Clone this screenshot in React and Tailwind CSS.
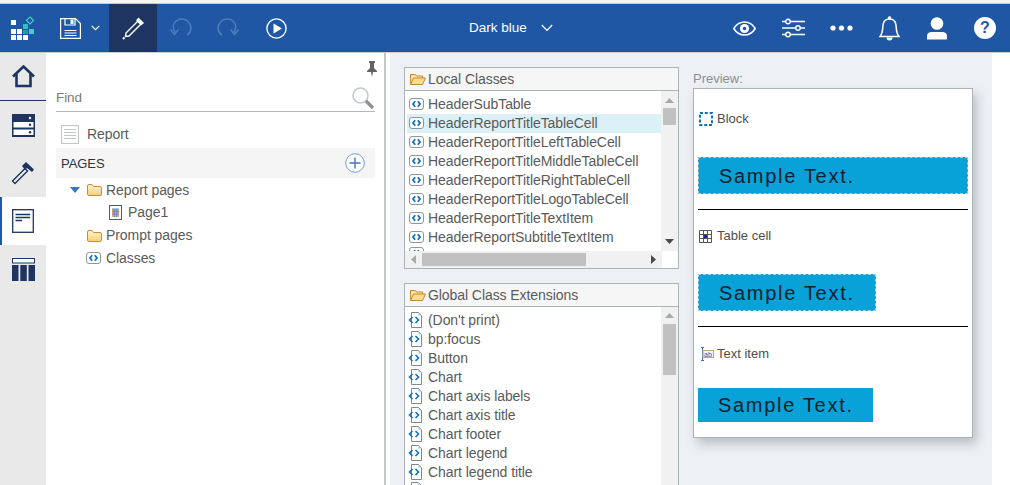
import React from "react";

const Font = "font-['Liberation_Sans',Arial,sans-serif]";

function ClassIcon() {
  return (
    <svg width="15" height="13" viewBox="0 0 15 13" className="shrink-0">
      <rect x="0.5" y="0.5" width="14" height="11" rx="2.5" fill="#fff" stroke="#8f959b" />
      <path d="M6.2 3.2 L4 6 L6.2 8.8 M8.8 3.2 L11 6 L8.8 8.8" fill="none" stroke="#1470b8" strokeWidth="1.8" />
    </svg>
  );
}

function FileClassIcon() {
  return (
    <svg width="15" height="17" viewBox="0 0 15 17" className="shrink-0">
      <path d="M3.5 .5 H10.5 L13.5 3.5 V15.5 H3.5 Z" fill="#fff" stroke="#7d8b96" />
      <path d="M10.5 .5 V3.5 H13.5 Z" fill="#a9c4d8" />
      <path d="M4.5 5 L1.5 8 L4.5 11 M7.5 5 L10.5 8 L7.5 11" fill="none" stroke="#1470b8" strokeWidth="1.6" />
    </svg>
  );
}

function Folder({ open }) {
  return open ? (
    <svg width="16" height="12" viewBox="0 0 16 12" className="shrink-0">
      <path d="M.5 11.5 V1.5 H5.5 L6.5 3 H12.5 V5" fill="#fbe3a8" stroke="#c58b32" />
      <path d="M.5 11.5 L3.5 5 H15.5 L12.5 11.5 Z" fill="#fcdc94" stroke="#c58b32" />
    </svg>
  ) : (
    <svg width="15" height="12" viewBox="0 0 15 12" className="shrink-0">
      <defs>
        <linearGradient id="fg" x1="0" y1="0" x2="0" y2="1">
          <stop offset="0" stopColor="#fff3cf" />
          <stop offset="1" stopColor="#f9cf79" />
        </linearGradient>
      </defs>
      <path d="M.5 2 Q.5 .5 2 .5 H5 L6.5 2.5 H13 Q14.5 2.5 14.5 4 V10 Q14.5 11.5 13 11.5 H2 Q.5 11.5 .5 10 Z" fill="url(#fg)" stroke="#c98d35" />
    </svg>
  );
}

function Arrow({ d }) {
  const p = { up: "M0 5 L4.5 0 L9 5 Z", down: "M0 0 L9 0 L4.5 5 Z", left: "M5 0 V9 L0 4.5 Z", right: "M0 0 V9 L5 4.5 Z" }[d];
  const w = d === "left" || d === "right" ? 5 : 9;
  const h = d === "left" || d === "right" ? 9 : 5;
  const color = d === "up" || d === "left" ? "#a9a9a9" : "#4a4a4a";
  return (
    <svg width={w} height={h} viewBox={`0 0 ${w} ${h}`}>
      <path d={p} fill={color} />
    </svg>
  );
}

function Header() {
  return (
    <header className="flex h-[48px] shrink-0 items-center bg-[#1f57a4] text-white">
      <div className="flex w-[46px] justify-center">
        <svg width="24" height="24" viewBox="0 0 24 24">
          <rect x="0" y="4" width="5" height="5" fill="#fff" />
          <rect x="0" y="13" width="5" height="5" fill="#fff" />
          <rect x="6" y="13" width="5" height="5" fill="#fff" />
          <rect x="0" y="19" width="5" height="5" fill="#fff" />
          <rect x="6" y="19" width="5" height="5" fill="#fff" />
          <rect x="12" y="19" width="5" height="5" fill="#fff" />
          <rect x="12" y="8" width="5" height="5" fill="#2cc2b5" />
          <rect x="18" y="13" width="5" height="5" fill="#3fd0c0" />
          <rect x="12" y="14" width="5" height="4" fill="#1f9fa8" />
          <path d="M19 1 L22.5 4.5 L19 8 L15.5 4.5 Z" fill="none" stroke="#3fd0c0" strokeWidth="1.2" />
        </svg>
      </div>
      <div className="ml-[14px] flex w-[49px] items-center">
        <svg width="21" height="21" viewBox="0 0 21 21" fill="none" stroke="#fff" strokeWidth="1.2">
          <path d="M.6 .6 H15.5 L20.4 5.5 V20.4 H.6 Z" />
          <path d="M5 .6 V7 H15 V.6" />
          <rect x="10.5" y="1.5" width="3" height="4.5" fill="#fff" stroke="none" />
          <path d="M4.5 12.5 H16.5 M4.5 15 H16.5 M4.5 17.5 H16.5" />
        </svg>
        <svg width="9" height="6" viewBox="0 0 9 6" className="ml-[10px]">
          <path d="M.7 .8 L4.5 4.6 L8.3 .8" fill="none" stroke="#fff" strokeWidth="1.2" />
        </svg>
      </div>
      <div className="flex h-full w-[48px] items-center justify-center bg-[#1d3560]">
        <svg width="24" height="24" viewBox="0 0 24 24" fill="none" stroke="#fff" strokeWidth="1.4">
          <path d="M5 17 L17 5 L20 8 L8 20 L4.5 20.5 Z" />
          <path d="M17.5 2.5 L22 7 L20 8.5 L16 4.5 Z" fill="#fff" />
          <path d="M2 23 L3.5 21.5" strokeWidth="2" />
        </svg>
      </div>
      <div className="ml-[12px] flex w-[24px] justify-center">
        <svg width="24" height="20" viewBox="0 0 24 20" fill="none" stroke="#4d7cba" strokeWidth="1.6">
          <path d="M6.5 15 C-.5 5 11 -3 18.5 3 C24 8 22 15 18 17" />
          <path d="M1.5 11.5 L5.5 16.5 L9.5 11.5" />
        </svg>
      </div>
      <div className="ml-[23px] flex w-[24px] justify-center">
        <svg width="24" height="20" viewBox="0 0 24 20" fill="none" stroke="#4d7cba" strokeWidth="1.6">
          <path d="M17.5 15 C24.5 5 13 -3 5.5 3 C0 8 2 15 6 17" />
          <path d="M22.5 11.5 L18.5 16.5 L14.5 11.5" />
        </svg>
      </div>
      <div className="ml-[25px] flex w-[22px] justify-center">
        <svg width="21" height="21" viewBox="0 0 21 21">
          <circle cx="10.5" cy="10.5" r="9.6" fill="none" stroke="#fff" strokeWidth="1.4" />
          <path d="M7.5 5.5 L16 10.5 L7.5 15.5 Z" fill="#fff" />
        </svg>
      </div>
      <div className="ml-[182px] flex w-[83px] items-center gap-[14px]">
        <span className="text-[13.5px] whitespace-nowrap">Dark blue</span>
        <svg width="12" height="8" viewBox="0 0 12 8" className="shrink-0">
          <path d="M.8 1 L6 6.4 L11.2 1" fill="none" stroke="#fff" strokeWidth="1.3" />
        </svg>
      </div>
      <div className="ml-[181px] flex items-center">
        <svg width="23" height="15" viewBox="0 0 23 15">
          <path d="M.8 7.5 C6 -1.2 17 -1.2 22.2 7.5 C17 16.2 6 16.2 .8 7.5 Z" fill="none" stroke="#fff" strokeWidth="1.5" />
          <circle cx="11.5" cy="7.5" r="4.6" fill="#fff" />
          <circle cx="11.5" cy="7.5" r="1.7" fill="#1f57a4" />
        </svg>
        <svg width="23" height="20" viewBox="0 0 23 20" className="ml-[26px]" stroke="#fff" strokeWidth="1.4" fill="#1f57a4">
          <path d="M0 3.5 H23 M0 10 H23 M0 16.5 H23" />
          <circle cx="6" cy="3.5" r="2.2" />
          <circle cx="16" cy="10" r="2.2" />
          <circle cx="6" cy="16.5" r="2.2" />
        </svg>
        <svg width="23" height="6" viewBox="0 0 23 6" className="ml-[25px]" fill="#fff">
          <circle cx="3" cy="3" r="2.6" />
          <circle cx="11.5" cy="3" r="2.6" />
          <circle cx="20" cy="3" r="2.6" />
        </svg>
        <svg width="21" height="25" viewBox="0 0 21 25" className="ml-[26px]">
          <path d="M1 20.5 C4 17 3.5 13 4 9 C4.5 5 7 3 10.5 3 C14 3 16.5 5 17 9 C17.5 13 17 17 20 20.5 Z" fill="none" stroke="#fff" strokeWidth="1.5" />
          <circle cx="10.5" cy="2" r="1.8" fill="#fff" />
          <path d="M7.5 21.5 H13.5 A3 3 0 0 1 7.5 21.5 Z" fill="#fff" />
        </svg>
        <svg width="20" height="23" viewBox="0 0 20 23" className="ml-[27px]" fill="#fff">
          <circle cx="10" cy="6.5" r="6.3" />
          <path d="M0 22.5 V19 Q0 15.5 4 15 H16 Q20 15.5 20 19 V22.5 Z" />
        </svg>
        <div className="ml-[27px] flex h-[22px] w-[22px] items-center justify-center rounded-full bg-white text-[16px] font-bold text-[#1f57a4]">?</div>
      </div>
    </header>
  );
}

function RailItem({ children, active, line }) {
  return (
    <div className={`flex h-[48px] items-center justify-center ${active ? "border-l-2 border-[#1f57a4] bg-white pr-[2px]" : ""} ${line ? "border-b border-[#1d3560]" : ""}`}>
      {children}
    </div>
  );
}

function Rail() {
  return (
    <nav className="w-[46px] shrink-0 bg-[#e9e9e9]">
      <RailItem line>
        <svg width="23" height="23" viewBox="0 0 23 23" fill="none" stroke="#1d3560" strokeWidth="2.6">
          <path d="M1 11.5 L11.5 1.5 L22 11.5" />
          <path d="M4.5 9 V21 H18.5 V9" />
        </svg>
      </RailItem>
      <RailItem>
        <svg width="23" height="23" viewBox="0 0 23 23">
          <rect width="23" height="23" fill="#1d3560" />
          <rect x="1.5" y="8" width="20" height="5.5" fill="#fff" />
          <rect x="1.5" y="15.5" width="20" height="5.5" fill="#fff" />
          <circle cx="18" cy="4" r="1.2" fill="#fff" />
          <circle cx="18" cy="10.7" r="1.2" fill="#1d3560" />
          <circle cx="18" cy="18.2" r="1.2" fill="#1d3560" />
        </svg>
      </RailItem>
      <RailItem>
        <svg width="24" height="24" viewBox="0 0 24 24">
          <path d="M1.5 20 L14 7.5 L16.5 10 L4 22.5 Z" fill="none" stroke="#1d3560" strokeWidth="1.4" />
          <path d="M11 5 L15 1 L23 8.5 L21 11 L16 7 L14 9 Z" fill="#1d3560" />
        </svg>
      </RailItem>
      <RailItem active>
        <svg width="22" height="24" viewBox="0 0 22 24">
          <rect x=".7" y=".7" width="20.6" height="22.6" fill="#fff" stroke="#1d3560" strokeWidth="1.3" />
          <path d="M3.5 5.5 H18 M3.5 8.5 H18 M3.5 11.5 H10" stroke="#1d3560" strokeWidth="1.4" />
        </svg>
      </RailItem>
      <RailItem>
        <svg width="23" height="23" viewBox="0 0 23 23">
          <rect x=".5" y=".5" width="22" height="4.5" fill="#fff" stroke="#1d3560" />
          <rect x="0" y="7" width="6.5" height="16" fill="#1d3560" />
          <rect x="8.3" y="7" width="6.5" height="16" fill="#1d3560" />
          <rect x="16.5" y="7" width="6.5" height="16" fill="#1d3560" />
        </svg>
      </RailItem>
    </nav>
  );
}

function Tree() {
  return (
    <aside className="w-[340px] shrink-0 border-r-2 border-[#c4c6c8] bg-white pl-[10px] pr-[9px] text-[14px] tracking-[-0.07px] text-[#5a5a5a]">
      <div className="flex h-[24px] items-end justify-end">
        <svg width="12" height="16" viewBox="0 0 12 16" className="mr-[-3px]" fill="#5f6468">
          <path d="M3 0 H9 V1.5 L8 2.5 V7 L11 10 V11 H7 L6 16 L5 11 H1 V10 L4 7 V2.5 L3 1.5 Z" />
        </svg>
      </div>
      <div className="flex h-[35px] items-center justify-between border-b border-[#b5b8ba] pt-[8px]">
        <span className="text-[13.5px] text-[#7b7b7b]">Find</span>
        <svg width="24" height="24" viewBox="0 0 24 24" fill="none">
          <circle cx="9.5" cy="9.5" r="7.5" stroke="#c4c7c9" strokeWidth="1.6" />
          <path d="M15 15 L22 22" stroke="#8d9296" strokeWidth="3.4" />
        </svg>
      </div>
      <div className="flex h-[36px] items-center gap-[8px] pl-[5px] pt-[8px]">
        <svg width="18" height="19" viewBox="0 0 18 19" fill="none" stroke="#c2c6c6">
          <rect x=".5" y=".5" width="17" height="18" strokeWidth="1.2" />
          <path d="M3 4.5 H15 M3 7.5 H15 M3 10.5 H15 M3 13.5 H15" />
        </svg>
        <span>Report</span>
      </div>
      <div className="flex h-[30px] items-center justify-between bg-[#f5f5f5] pl-[5px] pr-[10px] text-[13px] text-[#333]">
        <span className="pt-[2px]">PAGES</span>
        <svg width="20" height="20" viewBox="0 0 20 20">
          <circle cx="10" cy="10" r="9.3" fill="#fff" stroke="#6f9ad6" strokeWidth="1" />
          <path d="M10 4.5 V15.5 M4.5 10 H15.5" stroke="#3f75bf" strokeWidth="1.4" />
        </svg>
      </div>
      <div className="mt-[1px] flex h-[22px] items-center pl-[14px]">
        <svg width="10" height="6" viewBox="0 0 10 6" className="mr-[7px]">
          <path d="M0 0 H10 L5 6 Z" fill="#3f75bf" />
        </svg>
        <Folder />
        <span className="ml-[4px]">Report pages</span>
      </div>
      <div className="flex h-[23px] items-center pl-[53px]">
        <svg width="13" height="15" viewBox="0 0 13 15" className="mr-[6px]">
          <rect x=".5" y=".5" width="12" height="14" fill="#fff" stroke="#4b5a72" />
          <path d="M3 4 H10 V12 H3 Z" fill="#f0a878" />
          <path d="M3 4 H10 M3 6.5 H10 M3 9 H10 M5.3 4 V12 M7.7 4 V12" stroke="#4f86d0" strokeWidth=".9" />
        </svg>
        <span>Page1</span>
      </div>
      <div className="flex h-[23px] items-center pl-[31px]">
        <Folder />
        <span className="ml-[4px]">Prompt pages</span>
      </div>
      <div className="flex h-[23px] items-center pl-[30px]">
        <ClassIcon />
        <span className="ml-[5px]">Classes</span>
      </div>
    </aside>
  );
}

function ListBox({ title, className, children }) {
  return (
    <section className={`flex flex-col border border-[#abb3b7] bg-white ${className}`}>
      <div className="flex h-[23px] shrink-0 items-center gap-[2px] border-b border-[#abb3b7] bg-[#f6f6f6] pl-[5px] text-[14px] tracking-[-0.07px] text-[#5a5a5a]">
        <Folder open />
        <span>{title}</span>
      </div>
      {children}
    </section>
  );
}

const localRows = [
  "HeaderSubTable",
  "HeaderReportTitleTableCell",
  "HeaderReportTitleLeftTableCell",
  "HeaderReportTitleMiddleTableCell",
  "HeaderReportTitleRightTableCell",
  "HeaderReportTitleLogoTableCell",
  "HeaderReportTitleTextItem",
  "HeaderReportSubtitleTextItem",
];

const globalRows = [
  "(Don't print)",
  "bp:focus",
  "Button",
  "Chart",
  "Chart axis labels",
  "Chart axis title",
  "Chart footer",
  "Chart legend",
  "Chart legend title",
];

function Classes() {
  return (
    <div className="ml-[14px] flex w-[275px] shrink-0 flex-col gap-[14px] pt-[14px]">
      <ListBox title="Local Classes" className="h-[202px] shrink-0">
        <div className="flex min-h-0 flex-1">
          <div className="min-w-0 flex-1 overflow-hidden pt-[4px] pl-[2px] text-[14px] tracking-[-0.07px] text-[#5a5a5a]">
            {localRows.map((r, i) => (
              <div key={r} className={`flex h-[19px] items-center gap-[4px] pl-[2px] ${i === 1 ? "bg-[#dcf0f8]" : ""}`}>
                <ClassIcon />
                <span className="whitespace-nowrap">{r}</span>
              </div>
            ))}
            <div className="h-[19px] pl-[2px]">
              <ClassIcon />
            </div>
          </div>
          <div className="flex w-[17px] shrink-0 flex-col items-center bg-[#f1f1f1] pt-[7px]">
            <Arrow d="up" />
            <div className="mt-[5px] h-[17px] w-[13px] bg-[#c1c1c1]" />
            <div className="flex-1" />
            <div className="pb-[7px]"><Arrow d="down" /></div>
          </div>
        </div>
        <div className="flex h-[17px] shrink-0">
          <div className="flex w-[257px] items-center bg-[#f1f1f1]">
            <div className="ml-[6px] w-[5px]"><Arrow d="left" /></div>
            <div className="ml-[6px] h-[13px] w-[164px] bg-[#c1c1c1]" />
            <div className="flex-1" />
            <div className="mr-[6px] w-[5px]"><Arrow d="right" /></div>
          </div>
        </div>
      </ListBox>
      <ListBox title="Global Class Extensions" className="min-h-0 flex-1 border-b-0">
        <div className="flex min-h-0 flex-1">
          <div className="min-w-0 flex-1 overflow-hidden pt-[4px] pl-[3px] text-[14px] tracking-[-0.07px] text-[#5a5a5a]">
            {globalRows.map((r) => (
              <div key={r} className="flex h-[19px] items-center gap-[5px]">
                <FileClassIcon />
                <span className="whitespace-nowrap">{r}</span>
              </div>
            ))}
            <FileClassIcon />
          </div>
          <div className="flex w-[17px] shrink-0 flex-col items-center bg-[#f1f1f1] pt-[6px]">
            <Arrow d="up" />
            <div className="mt-[6px] h-[51px] w-[13px] shrink-0 bg-[#c1c1c1]" />
          </div>
        </div>
      </ListBox>
    </div>
  );
}

const sample = "flex items-center bg-[#08a2d8] text-[20px] tracking-[1.7px] text-[#10202c]";

function Preview() {
  return (
    <div className="ml-[14px] w-[280px] shrink-0">
      <div className="h-[35px] pt-[17px] text-[13px] leading-[18px] text-[#8a8f92]">Preview:</div>
      <div className="flex h-[350px] flex-col border border-[#abb3b7] bg-white px-[4px] text-[13px] text-[#4d4d4d] shadow-[4px_6px_10px_rgba(90,100,110,0.35)]">
        <div className="mt-[22px] flex h-[16px] items-center gap-[4px] pl-[1px]">
          <svg width="14" height="14" viewBox="0 0 14 14" className="shrink-0">
            <rect x="1" y="1" width="12" height="12" fill="none" stroke="#1470b8" strokeWidth="2" strokeDasharray="3 1.8" />
          </svg>
          <span>Block</span>
        </div>
        <div className={`${sample} mt-[30px] h-[37px] border border-dashed border-[#b8c0c4] pl-[20px]`}>Sample Text.</div>
        <div className="mt-[15px] h-px bg-black" />
        <div className="mt-[18px] flex h-[16px] items-center gap-[5px] pl-[1px]">
          <svg width="13" height="13" viewBox="0 0 13 13" fill="none" stroke="#555">
            <path d="M.5 .5 H12.5 V12.5 H.5 Z M4.5 .5 V12.5 M8.5 .5 V12.5 M.5 4.5 H12.5 M.5 8.5 H12.5" />
            <rect x="5" y="5" width="3" height="3" fill="#1a1acc" stroke="none" />
          </svg>
          <span>Table cell</span>
        </div>
        <div className={`${sample} mt-[30px] h-[37px] w-[178px] border border-dashed border-[#a8cfe0] pl-[20px]`}>Sample Text.</div>
        <div className="mt-[15px] h-px bg-black" />
        <div className="mt-[19px] flex h-[16px] items-center gap-[3px] pl-[1px]">
          <svg width="15" height="14" viewBox="0 0 15 14">
            <path d="M2 .5 H5 M3.5 .5 V13.5 M2 13.5 H5" stroke="#3f6fb0" fill="none" />
            <rect x="4" y="3.5" width="10.5" height="7" fill="#eef3f8" stroke="#b8ab7a" />
            <text x="5" y="10" fontSize="7" fill="#2b62a8" fontFamily="Liberation Sans">ab</text>
          </svg>
          <span>Text item</span>
        </div>
        <div className={`${sample} mt-[26px] h-[34px] w-[175px] pl-[20px]`}>Sample Text.</div>
      </div>
    </div>
  );
}

export default function App() {
  return (
    <div className={`${Font} flex h-[485px] w-[1010px] flex-col overflow-hidden bg-white`}>
      <div className="h-[4px] shrink-0 border-b border-[#c9c9c9] bg-[#f4f4f4]" />
      <Header />
      <div className="flex min-h-0 flex-1 border-t border-[#c9ced3]">
        <Rail />
        <Tree />
        <div className="w-[4px] shrink-0 bg-white" />
        <div className="flex w-[602px] shrink-0 bg-[#edf1f5]">
          <Classes />
          <Preview />
        </div>
      </div>
    </div>
  );
}
